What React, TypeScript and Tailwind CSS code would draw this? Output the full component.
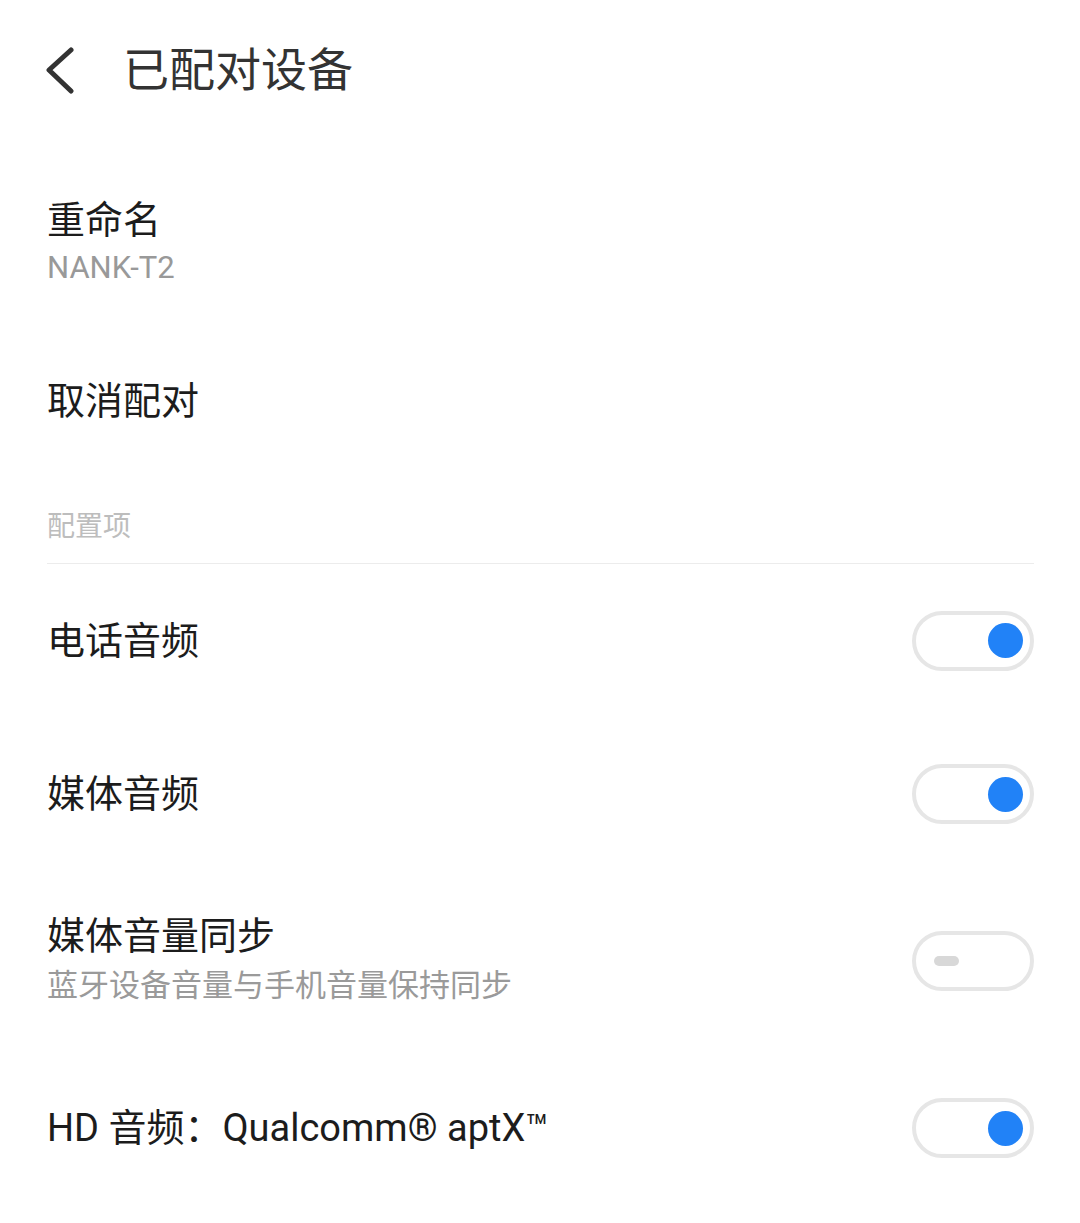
import React from 'react';

const FONT = { fontFamily: "Roboto, 'Noto Sans CJK SC', sans-serif" };

function Toggle({ on }: { on: boolean }) {
  return (
    <div className="flex h-[60px] w-[122px] shrink-0 items-center rounded-full border-[4px] border-[#e6e6e6] bg-white">
      {on ? (
        <div className="ml-auto mr-[7px] h-[35px] w-[35px] rounded-full bg-[#2182f7]" />
      ) : (
        <div className="ml-[18px] h-[10px] w-[25px] rounded-full bg-[#d8d8d8]" />
      )}
    </div>
  );
}

function SwitchRow({ title, sub, on, h }: { title: string; sub?: string; on: boolean; h: string }) {
  return (
    <div className={`flex items-center justify-between ${h}`}>
      <div className="flex flex-col">
        <span className="text-[38px] leading-[48px] text-[#1c1c1c]">{title}</span>
        {sub && <span className="mt-[2px] text-[31px] leading-[48px] text-[#9a9a9a]">{sub}</span>}
      </div>
      <Toggle on={on} />
    </div>
  );
}

export default function App() {
  return (
    <div className="min-h-[1223px] w-[1080px] bg-white" style={FONT}>
      {/* header */}
      <div className="flex h-[140px] items-center pl-[45px]">
        <svg width="32" height="48" viewBox="0 0 32 48" className="mt-[2px]">
          <path d="M26 3 L4 23 L26 44" fill="none" stroke="#333" strokeWidth="5" strokeLinecap="round" strokeLinejoin="round" />
        </svg>
        <h1 className="ml-[46px] text-[46px] leading-[56px] text-[#333]">已配对设备</h1>
      </div>

      <div className="pl-[47px] pr-[46px]">
        {/* rename */}
        <div className="flex h-[203px] flex-col justify-center">
          <span className="text-[38px] leading-[48px] text-[#1c1c1c]">重命名</span>
          <span className="mt-[4px] text-[31px] leading-[40px] text-[#999]">NANK-T2</span>
        </div>

        {/* unpair */}
        <div className="flex h-[116px] items-center">
          <span className="text-[38px] leading-[48px] text-[#1c1c1c]">取消配对</span>
        </div>

        {/* section header */}
        <div className="flex h-[105px] items-end border-b border-[#ececec] pb-[18px]">
          <span className="text-[28px] leading-[36px] text-[#bdbdbd]">配置项</span>
        </div>

        <SwitchRow title="电话音频" on h="h-[153px]" />
        <SwitchRow title="媒体音频" on h="h-[154px]" />
        <SwitchRow title="媒体音量同步" sub="蓝牙设备音量与手机音量保持同步" on={false} h="h-[180px]" />
        <SwitchRow title="HD 音频：Qualcomm® aptX™" on h="h-[154px]" />
      </div>
    </div>
  );
}
